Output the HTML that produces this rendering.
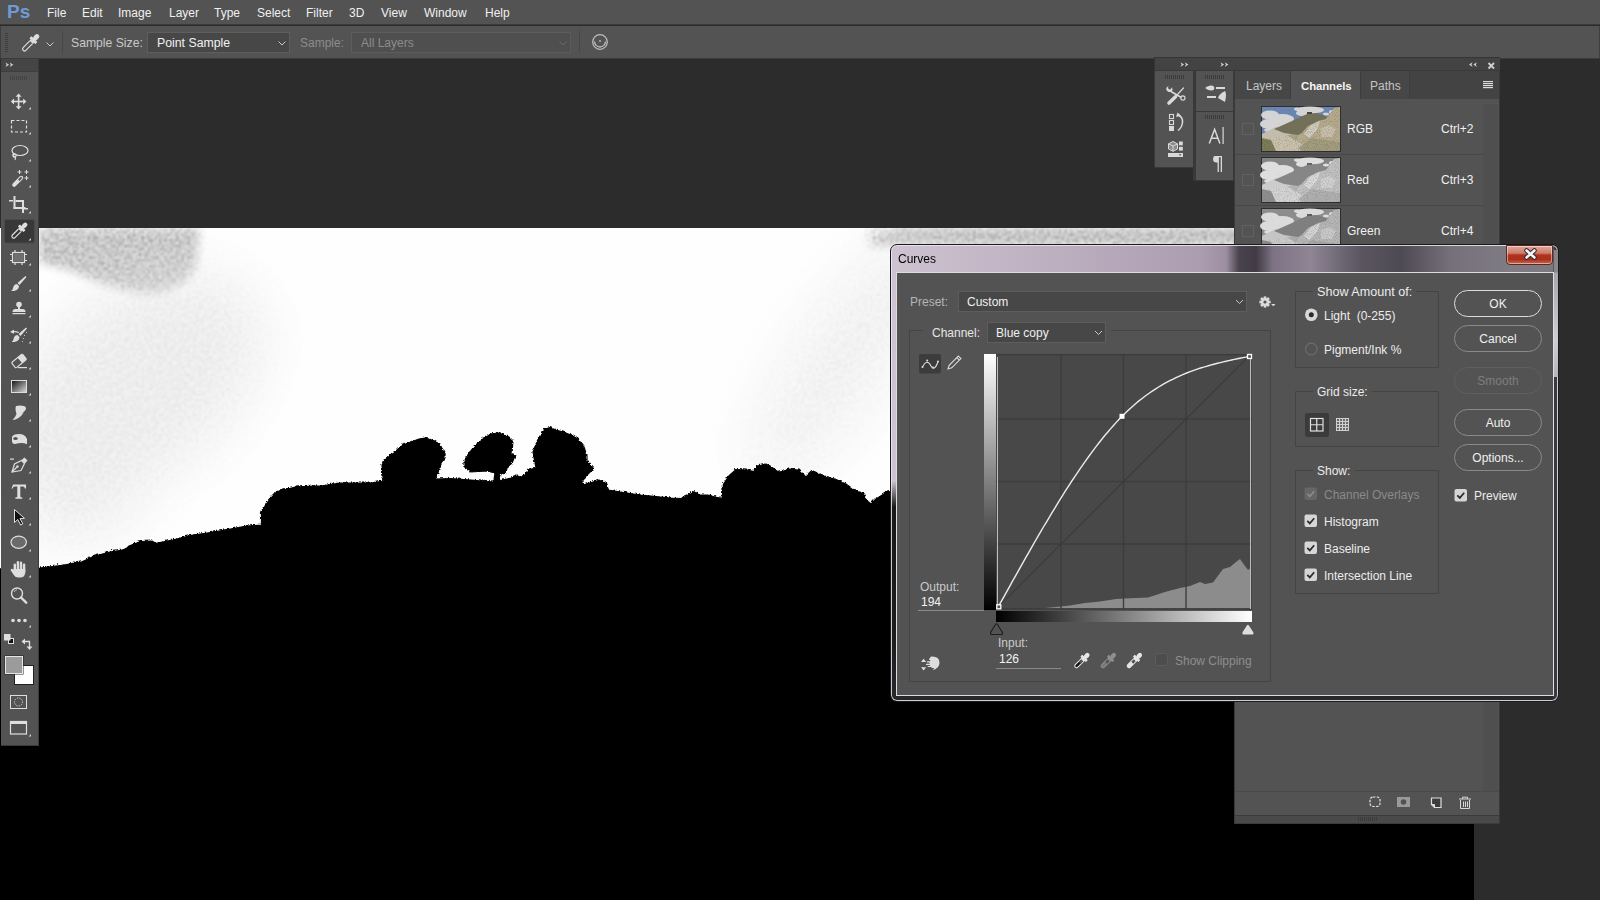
<!DOCTYPE html>
<html><head><meta charset="utf-8">
<style>
*{margin:0;padding:0;box-sizing:border-box}
html,body{width:1600px;height:900px;overflow:hidden;background:#2c2c2c;position:relative;font-family:"Liberation Sans",sans-serif}
.a{position:absolute}
.t{position:absolute;font-size:12px;line-height:14px;white-space:nowrap;color:#e8e8e8}
svg{position:absolute;overflow:visible}
</style></head><body>

<!-- MENU BAR -->
<div class="a" style="left:0;top:0;width:1600px;height:25px;background:#535353;border-bottom:1px solid #3b3b3b"></div>
<div class="t" style="left:7px;top:1px;font-size:19px;line-height:22px;font-weight:bold;color:#6e9bd8;letter-spacing:0px">Ps</div>
<div class="t" style="left:47px;top:6px;color:#f0f0f0">File</div>
<div class="t" style="left:82px;top:6px;color:#f0f0f0">Edit</div>
<div class="t" style="left:118px;top:6px;color:#f0f0f0">Image</div>
<div class="t" style="left:169px;top:6px;color:#f0f0f0">Layer</div>
<div class="t" style="left:214px;top:6px;color:#f0f0f0">Type</div>
<div class="t" style="left:257px;top:6px;color:#f0f0f0">Select</div>
<div class="t" style="left:306px;top:6px;color:#f0f0f0">Filter</div>
<div class="t" style="left:349px;top:6px;color:#f0f0f0">3D</div>
<div class="t" style="left:381px;top:6px;color:#f0f0f0">View</div>
<div class="t" style="left:424px;top:6px;color:#f0f0f0">Window</div>
<div class="t" style="left:485px;top:6px;color:#f0f0f0">Help</div>

<!-- OPTIONS BAR -->
<div class="a" style="left:0;top:26px;width:1600px;height:33px;background:#535353;border-left:1px solid #3f3f3f;border-right:1px solid #3f3f3f;border-bottom:1px solid #3b3b3b"></div>
<svg style="left:0;top:26px" width="620" height="33">
 <g fill="#3e3e3e"><rect x="5" y="7" width="3" height="1"/><rect x="5" y="9" width="3" height="1"/><rect x="5" y="11" width="3" height="1"/><rect x="5" y="13" width="3" height="1"/><rect x="5" y="15" width="3" height="1"/><rect x="5" y="17" width="3" height="1"/><rect x="5" y="19" width="3" height="1"/><rect x="5" y="21" width="3" height="1"/><rect x="5" y="23" width="3" height="1"/><rect x="5" y="25" width="3" height="1"/></g>
 <!-- eyedropper -->
 <g transform="translate(30.5,17) rotate(45)">
  <rect x="-2.4" y="-11.5" width="4.8" height="7" rx="2.4" fill="#dcdcdc"/>
  <rect x="-4.2" y="-5.5" width="8.4" height="3" rx="0.5" fill="#dcdcdc"/>
  <rect x="-2.4" y="-3" width="4.8" height="2" fill="#dcdcdc"/>
  <path d="M-1.9 -1 v9.5 a1.9 1.9 0 0 0 3.8 0 v-9.5" fill="none" stroke="#dcdcdc" stroke-width="1.2"/>
 </g>
 <path d="M46.5 16.5 l3.5 3.5 3.5 -3.5" fill="none" stroke="#c8c8c8" stroke-width="1"/>
 <rect x="62" y="5" width="1" height="22" fill="#474747"/>
 <rect x="579" y="5" width="1" height="22" fill="#474747"/>
 <g transform="translate(600,16)" fill="none" stroke="#bdbdbd" stroke-width="1.3">
  <circle r="7.3"/><path d="M-5.5 -0.5 a5.5 5.5 0 0 0 11 0"/>
 </g>
 <circle cx="600" cy="15" r="0.9" fill="#bdbdbd"/>
</svg>
<div class="t" style="left:71px;top:36px;color:#c9c9c9;font-size:12.2px">Sample Size:</div>
<div class="a" style="left:147px;top:32px;width:143px;height:21px;background:#474747;border:1px solid #5e5e5e"></div>
<div class="t" style="left:157px;top:36px;color:#f2f2f2;font-size:12.3px">Point Sample</div>
<svg style="left:278px;top:41px" width="10" height="6"><path d="M0.5 0.5 l3.5 3.5 3.5 -3.5" fill="none" stroke="#c8c8c8" stroke-width="1"/></svg>
<div class="t" style="left:300px;top:36px;color:#8c8c8c;font-size:12px">Sample:</div>
<div class="a" style="left:351px;top:32px;width:220px;height:21px;background:#4f4f4f;border:1px solid #5c5c5c"></div>
<div class="t" style="left:361px;top:36px;color:#8c8c8c;font-size:12px">All Layers</div>
<svg style="left:559px;top:41px" width="10" height="6"><path d="M0.5 0.5 l3.5 3.5 3.5 -3.5" fill="none" stroke="#6a6a6a" stroke-width="1"/></svg>

<!-- IMAGE -->
<svg style="left:0px;top:228px;overflow:hidden" width="1474" height="672" viewBox="-39 0 1474 672">
 <defs>
  <filter id="blur8" x="-50%" y="-50%" width="200%" height="200%"><feGaussianBlur stdDeviation="28"/></filter>
  <filter id="blur3" x="-20%" y="-20%" width="140%" height="140%"><feGaussianBlur stdDeviation="5"/></filter>
  <filter id="noise" x="0" y="0" width="100%" height="100%">
   <feTurbulence type="fractalNoise" baseFrequency="0.6" numOctaves="2" seed="3" result="n"/>
   <feColorMatrix in="n" type="matrix" values="0 0 0 0 0  0 0 0 0 0  0 0 0 0 0  0 0 0 -2.6 1.5" result="a"/>
   <feComposite in="SourceGraphic" in2="a" operator="in"/>
  </filter>
 </defs>
 <rect x="-39" width="1474" height="672" fill="#fefefe"/>
 <defs>
  <filter id="mott" x="0" y="0" width="100%" height="100%">
   <feTurbulence type="fractalNoise" baseFrequency="0.35" numOctaves="2" seed="7" result="n"/>
   <feColorMatrix in="n" type="matrix" values="0 0 0 0 0  0 0 0 0 0  0 0 0 0 0  0 0 0 -2.4 1.55" result="a0"/>
   <feGaussianBlur in="a0" stdDeviation="0.8" result="a"/>
   <feComposite in="SourceGraphic" in2="a" operator="in"/>
  </filter>
  <mask id="mk1" maskUnits="userSpaceOnUse" x="0" y="0" width="1435" height="672">
   <g filter="url(#blur3)">
    <path d="M0 0 H160 Q158 25 156 37 Q150 60 112 66 Q80 62 56 52 Q30 40 0 34Z" fill="#fff"/>
    <path d="M830 0 H1210 V18 H830 Z" fill="#fff"/>
   </g>
   <g filter="url(#blur8)">
    <ellipse cx="90" cy="160" rx="150" ry="90" fill="#333" transform="rotate(-35 90 160)"/>
    <ellipse cx="30" cy="250" rx="60" ry="60" fill="#333"/>
    <ellipse cx="805" cy="130" rx="45" ry="150" fill="#262626" transform="rotate(35 805 130)"/>
   </g>
  </mask>
 </defs>
 <g filter="url(#blur8)" opacity="0.9">
  <ellipse cx="90" cy="160" rx="150" ry="90" fill="#f3f3f3" transform="rotate(-35 90 160)"/>
  <ellipse cx="40" cy="250" rx="70" ry="60" fill="#f3f3f3"/>
  <ellipse cx="805" cy="130" rx="50" ry="150" fill="#f6f6f6" transform="rotate(35 805 130)"/>
 </g>
 <g filter="url(#blur3)">
  <path d="M0 0 H160 Q158 25 156 37 Q150 60 112 66 Q80 62 56 52 Q30 40 0 34Z" fill="#e2e2e2"/>
  <path d="M860 0 H1200 V16 H830 Z" fill="#d8d8d8"/>
 </g>
 <g mask="url(#mk1)">
  <rect width="1435" height="672" fill="#9a9a9a" filter="url(#mott)"/>
 </g>
 <filter id="rough" x="-5%" y="-5%" width="110%" height="110%"><feTurbulence type="turbulence" baseFrequency="0.35" numOctaves="2" seed="2" result="t"/><feDisplacementMap in="SourceGraphic" in2="t" scale="2.5" xChannelSelector="R" yChannelSelector="G"/></filter>
 <path d="M-50 340 L0.0 339.0 L21.0 336.5 L42.0 332.8 L53.0 327.7 L70.0 323.0 L85.5 320.5 L89.0 317.0 L100.6 312.5 L112.0 312.0 L116.0 314.4 L132.7 311.0 L151.6 306.3 L170.5 303.5 L193.0 299.7 L208.0 297.0 L221.5 296.0 L221.5 284.6 L225.0 277.0 L229.0 271.3 L236.6 262.8 L255.5 258.1 L274.4 257.2 L281.0 257.0 L299.8 254.2 L331.0 254.0 L344.0 252.0 L343.0 248.0 L342.0 236.0 L345.0 231.0 L351.0 226.0 L357.0 222.0 L363.0 216.0 L371.0 213.0 L379.0 210.0 L385.0 209.0 L393.0 211.0 L400.0 216.0 L405.0 223.0 L405.0 230.0 L401.0 235.0 L399.0 244.0 L396.0 249.0 L395.0 250.0 L411.0 249.5 L431.0 251.0 L453.0 253.0 L454.0 252.0 L455.0 244.0 L447.0 242.0 L431.0 243.0 L425.0 239.0 L425.0 232.0 L430.0 224.0 L436.0 217.0 L443.0 210.0 L451.0 205.0 L459.0 204.0 L469.0 208.0 L473.0 212.0 L472.0 225.0 L476.0 227.0 L473.0 234.0 L467.0 239.0 L466.0 244.0 L461.0 246.0 L459.0 252.0 L471.0 249.0 L477.0 247.0 L483.0 248.0 L488.0 243.0 L489.0 241.0 L496.0 239.0 L495.0 234.0 L493.0 223.0 L497.0 214.0 L501.0 207.0 L505.0 200.0 L510.0 198.5 L516.0 201.0 L523.0 203.0 L531.0 206.0 L538.0 210.0 L544.0 218.0 L547.0 227.0 L547.0 232.0 L554.0 240.0 L548.0 246.0 L543.0 251.0 L543.0 256.0 L553.0 253.0 L560.0 251.0 L567.0 255.0 L568.0 261.0 L581.0 263.0 L601.0 266.0 L631.0 269.0 L641.0 269.5 L649.0 266.0 L655.0 262.6 L659.0 266.0 L668.5 266.0 L682.0 269.5 L683.6 255.0 L689.0 246.8 L696.0 240.6 L707.0 241.0 L714.0 242.6 L718.0 237.0 L726.0 235.0 L734.5 240.0 L740.0 243.3 L749.7 240.0 L759.0 241.0 L766.0 248.0 L771.7 242.6 L785.0 248.0 L795.0 250.0 L806.0 255.0 L814.0 261.0 L824.0 264.6 L826.7 271.5 L831.0 275.0 L836.0 270.0 L847.0 263.0 L851.0 262.6 L861.0 258.0 L961.0 250.0 L1450 241.8 L1450 690 L-50 690Z" fill="#000" stroke="#000" stroke-width="1.2" stroke-linejoin="round" filter="url(#rough)"/>
</svg>

<!-- TOOLBAR -->
<div class="a" style="left:1px;top:59px;width:38px;height:687px;background:#535353;border-right:1px solid #3b3b3b;border-bottom:1px solid #3b3b3b"></div>
<div class="a" style="left:1px;top:59px;width:37px;height:13px;background:#454545;border-bottom:1px solid #3e3e3e"></div>
<svg style="left:0;top:0" width="40" height="750">
 <path d="M5.5 62.5 L9.1 64.8 L5.5 67.1 L6.6 64.8Z M9.7 62.5 L13.299999999999999 64.8 L9.7 67.1 L10.799999999999999 64.8Z" fill="#d4d4d4"/>
 <g fill="#434343"><rect x="10" y="76" width="1" height="4"/><rect x="12" y="76" width="1" height="4"/><rect x="14" y="76" width="1" height="4"/><rect x="16" y="76" width="1" height="4"/><rect x="18" y="76" width="1" height="4"/><rect x="20" y="76" width="1" height="4"/><rect x="22" y="76" width="1" height="4"/><rect x="24" y="76" width="1" height="4"/><rect x="26" y="76" width="1" height="4"/></g>
 <!-- move -->
 <g fill="#dedede" stroke="none">
  <rect x="17.8" y="96" width="1.6" height="12"/><rect x="12.5" y="100.7" width="12" height="1.6"/>
  <path d="M18.6 93.5 l3 3.2 h-6z M18.6 109.5 l3 -3.2 h-6z M10.8 101.5 l3.2 -3 v6z M26.4 101.5 l-3.2 -3 v6z"/>
 </g>
 <path d="M28.5 109.5 l2.5 -2.5 v2.5z" fill="#cfcfcf"/>
 <!-- marquee -->
 <rect x="11.5" y="120.5" width="15" height="11.5" fill="none" stroke="#dedede" stroke-width="1.2" stroke-dasharray="3 2"/>
 <path d="M28.5 134.5 l2.5 -2.5 v2.5z" fill="#cfcfcf"/>
 <!-- lasso -->
 <g fill="none" stroke="#dedede" stroke-width="1.2"><ellipse cx="20" cy="150.5" rx="8" ry="5"/><path d="M14 153 q-2 3 1 4 q1 1 0 3"/><circle cx="14.5" cy="155.5" r="1.6"/></g>
 <path d="M28.5 161.5 l2.5 -2.5 v2.5z" fill="#cfcfcf"/>
 <!-- magic wand -->
 <g transform="translate(17,182) rotate(45)"><rect x="-2" y="-8" width="4" height="14" rx="2" fill="#dedede"/><rect x="-1" y="-6.5" width="2" height="4" fill="#535353"/></g>
 <g fill="#dedede"><path d="M19 170 h1 v1.5 h1.5 v1 h-1.5 v1.5 h-1 v-1.5 h-1.5 v-1 h1.5z"/><path d="M26 170 h1 v1.5 h1.5 v1 h-1.5 v1.5 h-1 v-1.5 h-1.5 v-1 h1.5z"/><path d="M26 176 h1 v1.5 h1.5 v1 h-1.5 v1.5 h-1 v-1.5 h-1.5 v-1 h1.5z"/></g>
 <path d="M28.5 187.5 l2.5 -2.5 v2.5z" fill="#cfcfcf"/>
 <!-- crop -->
 <g fill="#dedede"><rect x="13.5" y="196" width="2" height="13"/><rect x="13.5" y="207" width="12" height="2"/><rect x="9" y="200" width="4" height="1.5"/><rect x="15.5" y="200" width="8" height="2"/><rect x="22" y="200" width="2" height="13"/><rect x="24" y="208" width="4" height="1.5"/></g>
 <path d="M28.5 213.5 l2.5 -2.5 v2.5z" fill="#cfcfcf"/>
 <!-- eyedropper selected -->
 <rect x="4.5" y="219.5" width="30" height="23.5" rx="2" fill="#383838" stroke="#4a4a4a" stroke-width="1"/>
 <g transform="translate(19,231) rotate(45)">
  <rect x="-2.2" y="-11" width="4.4" height="6.5" rx="2.2" fill="#dedede"/>
  <rect x="-4" y="-5.2" width="8" height="2.8" rx="0.5" fill="#dedede"/>
  <rect x="-2.2" y="-3" width="4.4" height="2" fill="#dedede"/>
  <path d="M-1.8 -1 v8.5 a1.8 1.8 0 0 0 3.6 0 v-8.5" fill="none" stroke="#dedede" stroke-width="1.2"/>
 </g>
 <path d="M28.5 240.5 l2.5 -2.5 v2.5z" fill="#cfcfcf"/>
 <!-- frame -->
 <g fill="none" stroke="#dedede" stroke-width="1.2"><rect x="12.5" y="252.5" width="12" height="10"/>
 <path d="M10 254.5 h2.5 M10 260.5 h2.5 M24.5 254.5 h2.5 M24.5 260.5 h2.5 M15 250 v2.5 M22 250 v2.5 M15 262.5 v2.5 M22 262.5 v2.5"/></g>
 <rect x="13.5" y="253.5" width="10" height="8" fill="#707070"/>
 <path d="M28.5 265.5 l2.5 -2.5 v2.5z" fill="#cfcfcf"/>
 <!-- brush -->
 <g fill="#dedede"><path d="M25.5 276 l1 1 -7 8 -2 -2z"/><path d="M17 284 l2 2 q0 4 -5 5 q-3 0 -3 0 q2 -1 2 -3 q1 -4 4 -4z"/></g>
 <path d="M28.5 291.5 l2.5 -2.5 v2.5z" fill="#cfcfcf"/>
 <!-- stamp -->
 <g fill="#dedede"><circle cx="19" cy="304.5" r="2.8"/><rect x="18" y="306" width="2" height="3"/><path d="M12.5 312 q0 -3 3 -3 h7 q3 0 3 3z"/><rect x="12.5" y="313" width="13" height="1.2"/></g>
 <path d="M28.5 317.5 l2.5 -2.5 v2.5z" fill="#cfcfcf"/>
 <!-- history brush -->
 <g fill="#dedede"><path d="M26 327.5 l1 1 -6.5 7.5 -2 -2z"/><path d="M17.5 335 l2 2 q0 4 -5 5 q-3 0 -3 0 q2 -1 2 -3 q1 -4 4 -4z"/><path d="M10 332 l4 -2.5 v1.5 q3 0 5 1 l-0.5 1 q-2 -1 -4.5 -0.8 v1.5z"/></g>
 <g fill="#bdbdbd"><rect x="24" y="335" width="1" height="1"/><rect x="23" y="338" width="1" height="1"/><rect x="22" y="341" width="1" height="1"/><rect x="26" y="332" width="1" height="1"/></g>
 <path d="M28.5 343.5 l2.5 -2.5 v2.5z" fill="#cfcfcf"/>
 <!-- eraser -->
 <g transform="translate(19,361) rotate(-40)"><rect x="-7" y="-3.5" width="14" height="7" rx="1.2" fill="none" stroke="#dedede" stroke-width="1.2"/><rect x="1" y="-3.5" width="6" height="7" fill="#dedede"/></g>
 <rect x="18" y="367" width="9" height="1.2" fill="#dedede"/>
 <path d="M28.5 369.5 l2.5 -2.5 v2.5z" fill="#cfcfcf"/>
 <!-- gradient -->
 <defs><linearGradient id="gt" x1="0" y1="0" x2="1" y2="1"><stop offset="0" stop-color="#111"/><stop offset="1" stop-color="#ddd"/></linearGradient></defs>
 <rect x="11.5" y="380.5" width="15" height="12" fill="url(#gt)" stroke="#dedede" stroke-width="1"/>
 <path d="M28.5 395.5 l2.5 -2.5 v2.5z" fill="#cfcfcf"/>
 <!-- smudge -->
 <path d="M16 406 q4 -1 8 0 q3 1 1.5 4 q-2 3 -5 4 l3 -1 q-2 3 -5 5 q-3 2 -6 2 q3 -3 4 -6 q-1 -3 -1 -5 q0 -2 0.5 -3z" fill="#dedede"/>
 <path d="M28.5 421.5 l2.5 -2.5 v2.5z" fill="#cfcfcf"/>
 <!-- sponge/dodge -->
 <path d="M12 437 q1 -3 7 -3 q6 0 8 5 v5 h-1 q-1 -1 -4 -1 q-4 0 -7 1 q-3 0 -3 -3z" fill="#dedede"/>
 <ellipse cx="15.5" cy="438.5" rx="2.2" ry="1.6" fill="#535353"/>
 <path d="M28.5 447.5 l2.5 -2.5 v2.5z" fill="#cfcfcf"/>
 <!-- pen -->
 <g fill="none" stroke="#dedede" stroke-width="1.2"><path d="M12 472 l2.5 -8 7 -3.5 3 3 -3.5 7z"/><path d="M12 472 l5 -5"/></g>
 <path d="M21.5 460 l3 -2.5 3 3 -2.5 3z" fill="#dedede"/><circle cx="17.5" cy="466.5" r="1.2" fill="#dedede"/><rect x="10" y="458.5" width="4" height="1.2" fill="#dedede"/>
 <path d="M28.5 473.5 l2.5 -2.5 v2.5z" fill="#cfcfcf"/>
 <!-- type -->
 <g fill="#dedede"><path d="M13 484.5 h13 v4 h-1.2 q0 -2 -2 -2 h-2.5 v10 q0 1 2 1 v1.2 h-7 v-1.2 q2 0 2 -1 v-10 h-2.5 q-2 0 -2 2 h-1.2z"/></g>
 <path d="M28.5 499.5 l2.5 -2.5 v2.5z" fill="#cfcfcf"/>
 <!-- path select -->
 <path d="M14.5 509.5 v13 l3.3 -3 2.8 5.5 2.2 -1.1 -2.8 -5.3 4.5 -0.3z" fill="#111" stroke="#dedede" stroke-width="1"/>
 <path d="M28.5 525.5 l2.5 -2.5 v2.5z" fill="#cfcfcf"/>
 <!-- ellipse -->
 <ellipse cx="18.7" cy="542.2" rx="7.7" ry="6.1" fill="#6b6b6b" stroke="#dedede" stroke-width="1.2"/>
 <path d="M28.5 551.5 l2.5 -2.5 v2.5z" fill="#cfcfcf"/>
 <!-- hand -->
 <g fill="#dedede">
  <rect x="13.6" y="563.5" width="2.4" height="9" rx="1.2"/>
  <rect x="16.7" y="561" width="2.4" height="10" rx="1.2"/>
  <rect x="19.8" y="561.5" width="2.4" height="10" rx="1.2"/>
  <rect x="22.9" y="563.5" width="2.4" height="9" rx="1.2"/>
  <path d="M13.6 569 h11.7 v3 q0 5.5 -5.5 5.5 h-1.5 q-3 0 -4.5 -2.5 l-3 -4.5 q-0.6 -1.2 0.6 -1.6 q1 -0.3 1.6 0.6 l0.6 0.8z"/>
 </g>
 <path d="M28.5 577.5 l2.5 -2.5 v2.5z" fill="#cfcfcf"/>
 <!-- zoom -->
 <g fill="none" stroke="#dedede" stroke-width="1.4"><circle cx="17" cy="593.5" r="5.5"/><path d="M21 597.5 l5.2 5.2" stroke-width="2.4" stroke-linecap="round"/></g>
 <path d="M14 592 q1 -2 3 -2.3" fill="none" stroke="#dedede" stroke-width="0.8"/>
 <!-- more -->
 <g fill="#dedede"><circle cx="13" cy="620.5" r="1.8"/><circle cx="19" cy="620.5" r="1.8"/><circle cx="25" cy="620.5" r="1.8"/></g>
 <path d="M28.5 627.5 l2.5 -2.5 v2.5z" fill="#cfcfcf"/>
 <!-- default colors -->
 <rect x="8.5" y="638.5" width="5" height="5" fill="#111" stroke="#dedede" stroke-width="1"/>
 <rect x="4.5" y="634.5" width="5.5" height="5.5" fill="#dedede" stroke="#dedede" stroke-width="1"/>
 <g fill="none" stroke="#dedede" stroke-width="1.3"><path d="M24 641.5 h5.5 v6"/></g><path d="M21.5 641.5 l3.5 -3 v6z M29.5 650 l-3 -3.5 h6z" fill="#dedede"/>
 <!-- fg/bg -->
 <rect x="14.5" y="665.5" width="19" height="19" fill="#fff" stroke="#222" stroke-width="1"/>
 <rect x="4.5" y="655.5" width="19" height="19" fill="#222"/>
 <rect x="5.5" y="656.5" width="17" height="17" fill="#9b9b9b" stroke="#e6e6e6" stroke-width="1"/>
 <!-- quick mask -->
 <rect x="10.5" y="695.5" width="16" height="13" fill="none" stroke="#dedede" stroke-width="1"/>
 <circle cx="18.5" cy="702" r="4" fill="none" stroke="#dedede" stroke-width="1" stroke-dasharray="1.2 1.2"/>
 <!-- screen mode -->
 <rect x="10.5" y="721.5" width="16" height="12.5" fill="none" stroke="#dedede" stroke-width="1.2"/>
 <rect x="10.5" y="721.5" width="16" height="2.5" fill="#dedede"/>
 <path d="M28.5 736.5 l2.5 -2.5 v2.5z" fill="#cfcfcf"/>
</svg>

<!-- PANEL DOCK -->
<div class="a" style="left:1154px;top:57px;width:346px;height:14px;background:#434343;border-top:1px solid #353535;border-left:1px solid #353535"></div>
<div class="a" style="left:1154px;top:70px;width:41px;height:98px;background:#393939"></div>
<div class="a" style="left:1155px;top:70px;width:38px;height:97px;background:#535353;border-top:1px solid #3a3a3a"></div>
<div class="a" style="left:1193px;top:70px;width:43px;height:111px;background:#393939"></div>
<div class="a" style="left:1196px;top:71px;width:37px;height:40px;background:#535353"></div>
<div class="a" style="left:1196px;top:112px;width:37px;height:68px;background:#535353"></div>
<!-- main panel -->
<div class="a" style="left:1234px;top:70px;width:266px;height:754px;background:#393939"></div>
<div class="a" style="left:1235px;top:71px;width:264px;height:28px;background:#434343"></div>
<div class="a" style="left:1235px;top:71px;width:56px;height:28px;background:#474747;border-right:1px solid #3d3d3d"></div>
<div class="a" style="left:1291px;top:71px;width:69px;height:29px;background:#535353"></div>
<div class="a" style="left:1360px;top:71px;width:50px;height:28px;background:#474747;border-right:1px solid #3d3d3d;border-left:1px solid #3d3d3d"></div>
<div class="a" style="left:1235px;top:99px;width:264px;height:692px;background:#535353"></div>
<div class="a" style="left:1483px;top:104px;width:15px;height:687px;background:#4f4f4f"></div>
<div class="a" style="left:1235px;top:791px;width:264px;height:24px;background:#535353;border-top:1px solid #4a4a4a"></div>
<div class="a" style="left:1235px;top:815px;width:264px;height:9px;background:#4a4a4a;border-top:1px solid #3a3a3a;border-bottom:1px solid #3a3a3a"></div>
<div class="t" style="left:1246px;top:79px;color:#c4c4c4">Layers</div>
<div class="t" style="left:1301px;top:79px;color:#f4f4f4;font-weight:bold;font-size:11.4px;letter-spacing:-0.1px">Channels</div>
<div class="t" style="left:1370px;top:79px;color:#c4c4c4">Paths</div>
<!-- rows -->
<svg style="left:0;top:0;width:0;height:0">
 <defs>
  <filter id="tb" x="0" y="0" width="100%" height="100%"><feGaussianBlur stdDeviation="0.7"/></filter>
  <g id="thumb"><g filter="url(#tb)">
   <rect width="78" height="44" fill="#6a85b0"/>
   <g fill="#d4d4d4">
    <ellipse cx="8" cy="8" rx="9" ry="4.5"/><ellipse cx="20" cy="12" rx="12" ry="5"/><ellipse cx="7" cy="17" rx="9" ry="5"/><ellipse cx="24" cy="19" rx="10" ry="4"/><ellipse cx="14" cy="23" rx="12" ry="3"/>
    <ellipse cx="48" cy="3" rx="14" ry="3.5"/><ellipse cx="40" cy="6" rx="6" ry="3"/><ellipse cx="35" cy="2" rx="3" ry="1.5"/><ellipse cx="64" cy="7" rx="3" ry="1.5"/><ellipse cx="70" cy="5" rx="3" ry="2"/>
   </g>
   <path d="M0 27 L14 20 L30 20 L36 26 L20 32 L0 34Z" fill="#c2bcaf"/>
   <path d="M18 31 L36 25 L48 18 L42 31 L30 37Z" fill="#a9a08a"/>
   <path d="M12 22 L30 14 L45 7 L55 6 L64 9 L67 14 L54 18 L45 23 L36 28 L22 26Z" fill="#727058"/>
   <path d="M36 30 L46 19 L56 14 L64 12 L72 1 L78 0 L78 44 L32 44 L30 36Z" fill="#b7ab8e"/>
   <path d="M42 27 L49 18 L58 14 L55 23 L47 31Z" fill="#d0cbc0"/>
   <path d="M58 22 L66 18 L74 22 L70 30 L60 30Z" fill="#c8c0ae"/>
   <path d="M0 31 L26 29 L38 36 L48 44 L0 44Z" fill="#cbc2ad"/>
   <path d="M0 31 L9 33 L14 44 L0 44Z" fill="#7b7b58"/>
   <path d="M36 41 L50 31 L78 35 L78 44 L40 44Z" fill="#a39d7e"/>
   <rect x="45" y="5" width="5" height="2" fill="#444"/>
  </g>
  <path d="M36 30 L46 19 L56 14 L64 12 L72 1 L78 0 L78 44 L0 44 L0 31 L26 29Z" fill="#3a3a30" filter="url(#tnoise)" opacity="0.28"/>
  </g>
  <filter id="tnoise" x="0" y="0" width="100%" height="100%">
   <feTurbulence type="fractalNoise" baseFrequency="0.9" numOctaves="1" seed="5" result="n"/>
   <feColorMatrix in="n" type="matrix" values="0 0 0 0 0  0 0 0 0 0  0 0 0 0 0  0 0 0 -3 1.6" result="a"/>
   <feComposite in="SourceGraphic" in2="a" operator="in"/>
  </filter>
  <filter id="redch"><feColorMatrix type="matrix" values="0.8 0.2 0 0 0.07  0.8 0.2 0 0 0.07  0.8 0.2 0 0 0.07  0 0 0 1 0"/></filter>
  <filter id="grch"><feColorMatrix type="matrix" values="0.2 0.8 0 0 0.05  0.2 0.8 0 0 0.05  0.2 0.8 0 0 0.05  0 0 0 1 0"/></filter>
 </defs>
</svg>
<svg style="left:1261px;top:106px" width="80" height="46"><rect x="0.5" y="0.5" width="79" height="45" fill="#222" stroke="#2e2e2e"/><use href="#thumb" x="1" y="1"/></svg>
<svg style="left:1261px;top:157px" width="80" height="46"><rect x="0.5" y="0.5" width="79" height="45" fill="#222" stroke="#2e2e2e"/><g filter="url(#redch)"><use href="#thumb" x="1" y="1"/></g></svg>
<svg style="left:1261px;top:208px" width="80" height="46"><rect x="0.5" y="0.5" width="79" height="45" fill="#222" stroke="#2e2e2e"/><g filter="url(#grch)"><use href="#thumb" x="1" y="1"/></g></svg>
<div class="a" style="left:1242px;top:123px;width:12px;height:12px;border:1px solid #616161"></div>
<div class="a" style="left:1242px;top:174px;width:12px;height:12px;border:1px solid #616161"></div>
<div class="a" style="left:1242px;top:225px;width:12px;height:12px;border:1px solid #616161"></div>

<div class="a" style="left:1235px;top:154px;width:248px;height:1px;background:#474747"></div>
<div class="a" style="left:1235px;top:205px;width:248px;height:1px;background:#474747"></div>
<div class="t" style="left:1347px;top:122px;color:#f0f0f0">RGB</div>
<div class="t" style="left:1441px;top:122px;color:#f0f0f0">Ctrl+2</div>
<div class="t" style="left:1347px;top:173px;color:#f0f0f0">Red</div>
<div class="t" style="left:1441px;top:173px;color:#f0f0f0">Ctrl+3</div>
<div class="t" style="left:1347px;top:224px;color:#f0f0f0">Green</div>
<div class="t" style="left:1441px;top:224px;color:#f0f0f0">Ctrl+4</div>
<svg style="left:1150px;top:55px" width="350" height="770">
 <g fill="#d0d0d0">
  <path d="M30.5 7.3 L34.1 9.6 L30.5 11.899999999999999 L31.6 9.6Z M34.8 7.3 L38.4 9.6 L34.8 11.899999999999999 L35.9 9.6Z"/>
  <path d="M70.5 7.3 L74.1 9.6 L70.5 11.899999999999999 L71.6 9.6Z M74.8 7.3 L78.39999999999999 9.6 L74.8 11.899999999999999 L75.89999999999999 9.6Z"/>
  <path d="M322.6 7.3 L319 9.6 L322.6 11.899999999999999 L321.5 9.6Z M326.90000000000003 7.3 L323.3 9.6 L326.90000000000003 11.899999999999999 L325.8 9.6Z"/>
 </g>
 <path d="M338.5 8 l5.5 5.5 M344 8 l-5.5 5.5" stroke="#d0d0d0" stroke-width="1.8"/>
 <g fill="#3c3c3c"><rect x="15" y="20" width="1" height="4"/><rect x="17" y="20" width="1" height="4"/><rect x="19" y="20" width="1" height="4"/><rect x="21" y="20" width="1" height="4"/><rect x="23" y="20" width="1" height="4"/><rect x="25" y="20" width="1" height="4"/><rect x="27" y="20" width="1" height="4"/><rect x="29" y="20" width="1" height="4"/><rect x="31" y="20" width="1" height="4"/><rect x="33" y="20" width="1" height="4"/><rect x="55" y="20" width="1" height="4"/><rect x="57" y="20" width="1" height="4"/><rect x="59" y="20" width="1" height="4"/><rect x="61" y="20" width="1" height="4"/><rect x="63" y="20" width="1" height="4"/><rect x="65" y="20" width="1" height="4"/><rect x="67" y="20" width="1" height="4"/><rect x="69" y="20" width="1" height="4"/><rect x="71" y="20" width="1" height="4"/><rect x="73" y="20" width="1" height="4"/><rect x="55" y="60" width="1" height="4"/><rect x="57" y="60" width="1" height="4"/><rect x="59" y="60" width="1" height="4"/><rect x="61" y="60" width="1" height="4"/><rect x="63" y="60" width="1" height="4"/><rect x="65" y="60" width="1" height="4"/><rect x="67" y="60" width="1" height="4"/><rect x="69" y="60" width="1" height="4"/><rect x="71" y="60" width="1" height="4"/><rect x="73" y="60" width="1" height="4"/></g>
 <g fill="#d8d8d8"><rect x="333" y="26" width="10" height="1.2"/><rect x="333" y="28" width="10" height="1.2"/><rect x="333" y="30" width="10" height="1.2"/><rect x="333" y="32" width="10" height="1.2"/></g>
 <!-- tools icon -->
 <g stroke="#d9d9d9" fill="none" stroke-linecap="round">
  <path d="M21 36.5 L30.5 42" stroke-width="1.6"/>
  <path d="M33.5 33 L25.5 41.5" stroke-width="1.2"/>
  <path d="M25.5 41.8 L19 48" stroke-width="3.6"/>
  <circle cx="32.9" cy="43" r="2.1" stroke-width="1.2"/>
 </g>
 <path d="M16.2 33.8 q0.2 -2.4 2.6 -2.6 l-1 1.6 1.3 1.6 1.9 -0.4 0.8 -1.7 q1.6 1.9 0.2 3.7 q-1.6 1.6 -3.8 0.8 q-2.1 -0.9 -2 -3z" fill="#d9d9d9"/>
 <!-- history icon -->
 <g fill="none" stroke="#d9d9d9" stroke-width="1.1"><rect x="19.5" y="59.5" width="4" height="4"/><rect x="19.5" y="65.5" width="4" height="4"/></g>
 <rect x="19" y="71" width="5" height="5" fill="#d9d9d9"/>
 <path d="M28.5 60.5 q4.5 1.5 4 7 q-0.5 5 -4.5 8" fill="none" stroke="#d9d9d9" stroke-width="1.5"/>
 <path d="M26 62 l1.5 -4.5 3.5 3z" fill="#d9d9d9"/>
 <!-- 3D icon -->
 <path d="M23 86.5 l4.5 2.3 v5.2 l-4.5 2.3 -4.5 -2.3 v-5.2z" fill="#8a8a8a" stroke="#d9d9d9" stroke-width="1"/>
 <path d="M18.5 88.8 l4.5 2.3 4.5 -2.3 M23 91.1 v5.2" fill="none" stroke="#d9d9d9" stroke-width="1"/>
 <rect x="29" y="86.5" width="3.8" height="3.8" fill="#d9d9d9"/><rect x="29" y="91.8" width="3.8" height="3.8" fill="#d9d9d9"/>
 <rect x="18" y="98" width="15" height="4" fill="#d9d9d9"/><path d="M28.8 99.3 h2.6 l-1.3 1.6z" fill="#535353"/>
 <!-- brush presets -->
 <g fill="#d9d9d9"><path d="M55 33 q3 -3 7 -2.5 q2.5 0.5 2.5 2.5 q0 2 -2.5 2.5 q-3 0.5 -7 -2.5z"/><rect x="66" y="32" width="9" height="2"/><rect x="57" y="41" width="9" height="2"/><path d="M75 36 q2 3 0 11 l-7 -4 q1 -4 7 -7z"/></g>
 <!-- A| -->
 <path d="M59.3 88.5 L64.6 74.3 L69.9 88.5 M61.3 83.3 H67.9" fill="none" stroke="#d9d9d9" stroke-width="1.5"/>
 <rect x="72.5" y="72" width="1.2" height="17" fill="#d9d9d9"/>
 <!-- pilcrow -->
 <path d="M65 101 h7 v16 h-1.3 v-14.7 h-1.8 v14.7 h-1.3 v-9.5 h-1 q-3.5 0 -3.5 -3.3 q0 -3.2 2 -3.2z" fill="#d9d9d9"/>
 <g fill="#3c3c3c"><rect x="208" y="762" width="1" height="4"/><rect x="210" y="762" width="1" height="4"/><rect x="212" y="762" width="1" height="4"/><rect x="214" y="762" width="1" height="4"/><rect x="216" y="762" width="1" height="4"/><rect x="218" y="762" width="1" height="4"/><rect x="220" y="762" width="1" height="4"/><rect x="222" y="762" width="1" height="4"/><rect x="224" y="762" width="1" height="4"/><rect x="226" y="762" width="1" height="4"/></g>
 <!-- footer icons -->
 <rect x="220" y="742" width="10" height="9.5" rx="3" fill="none" stroke="#e6e6e6" stroke-width="1.2" stroke-dasharray="2.4 1.4"/>
 <rect x="247" y="742" width="13" height="10" fill="#9a9a9a"/><circle cx="253.5" cy="747" r="2.8" fill="#535353"/>
 <path d="M281.5 743 h9.5 v9.5 h-6.5 l-3 -3z" fill="#3c3c3c" stroke="#e0e0e0" stroke-width="1.2"/><path d="M281.5 749.5 h3 v3" fill="#d0d0d0" stroke="#e0e0e0" stroke-width="1"/>
 <g fill="none" stroke="#d8d8d8" stroke-width="1.1"><path d="M309 744 h12 M312.5 744 v-1.8 h5 v1.8 M310.5 745 v8.5 h9 v-8.5 M313.5 746.5 v5.5 M315.5 746.5 v5.5 M317.5 746.5 v5.5" stroke-width="1"/></g>
</svg>
<!-- CURVES DIALOG -->
<div class="a" style="left:890px;top:244px;width:669px;height:458px;border-radius:7px;background:linear-gradient(90deg,rgba(0,0,0,0) 0,rgba(0,0,0,0) 662px,#3a3840 663px),linear-gradient(180deg,rgba(0,0,0,0) 0,rgba(0,0,0,0) 236px,#19181a 262px,#1e1d20 400px,#2a282d 100%),linear-gradient(90deg,#cdc3d1 0,#c2b5c5 110px,#b3a5b7 250px,#ab9caf 310px,#9d8fa1 335px,#4a434d 348px,#403b44 365px,#7d7384 382px,#8f8595 420px,#6e6874 450px,#5a5560 470px,#4e4a53 510px,#75707a 560px,#807c84 620px,#7a777d 669px);border:1px solid #1a1a1a;box-shadow:inset 0 0 0 1px rgba(235,235,235,0.85)"></div>
<div class="a" style="left:1554px;top:250px;width:4px;height:127px;background:linear-gradient(180deg,#858187 0,#8a868c 22px,#a9a5ac 23px,#d0cdd2 90px,#b8b5ba 127px)"></div>



<div class="t" style="left:898px;top:252px;color:#000">Curves</div>
<!-- close btn -->
<div class="a" style="left:1506px;top:245px;width:47px;height:20px;border-radius:0 0 4px 4px;border:1px solid #5a2a20;background:linear-gradient(180deg,#e3a99c 0,#cc7b69 40%,#b3321c 50%,#a8301f 75%,#c96a4f 100%);box-shadow:inset 0 0 0 1px rgba(255,255,255,0.45)"></div>
<svg style="left:1519px;top:246px" width="20" height="16"><path d="M7.5 4.5 L15.5 11.5 M15.5 4.5 L7.5 11.5" stroke="#2e2630" stroke-width="4.6" stroke-linecap="round"/><path d="M7.5 4.5 L15.5 11.5 M15.5 4.5 L7.5 11.5" stroke="#f4f4f4" stroke-width="2.6" stroke-linecap="round"/></svg>
<!-- client -->
<div class="a" style="left:896px;top:272px;width:658px;height:424px;background:#535353;border:1px solid #dedede"></div>
<div class="t" style="left:910px;top:295px;color:#b5b5b5;">Preset:</div>
<div class="a" style="left:958px;top:291px;width:289px;height:21px;background:#474747;border:1px solid #5d5d5d"></div>
<div class="t" style="left:967px;top:295px;color:#f0f0f0;">Custom</div>
<div class="t" style="left:932px;top:326px;color:#e6e6e6;">Channel:</div>
<div class="a" style="left:987px;top:322px;width:119px;height:21px;background:#474747;border:1px solid #5d5d5d"></div>
<div class="t" style="left:996px;top:326px;color:#f0f0f0;">Blue copy</div>
<div class="t" style="left:920px;top:580px;color:#cacaca;">Output:</div>
<div class="t" style="left:921px;top:595px;color:#f2f2f2;">194</div>
<div class="t" style="left:998px;top:636px;color:#cacaca;">Input:</div>
<div class="t" style="left:999px;top:652px;color:#f2f2f2;">126</div>
<div class="t" style="left:1175px;top:654px;color:#8e8e8e;">Show Clipping</div>
<div class="t" style="left:1317px;top:285px;color:#ececec;font-size:12.6px">Show Amount of:</div>
<div class="t" style="left:1324px;top:309px;color:#ececec;">Light&nbsp; (0-255)</div>
<div class="t" style="left:1324px;top:343px;color:#ececec;">Pigment/Ink %</div>
<div class="t" style="left:1317px;top:385px;color:#ececec;">Grid size:</div>
<div class="t" style="left:1317px;top:464px;color:#ececec;">Show:</div>
<div class="t" style="left:1324px;top:487.5px;color:#8a8a8a;">Channel Overlays</div>
<div class="t" style="left:1324px;top:515px;color:#ececec;">Histogram</div>
<div class="t" style="left:1324px;top:542px;color:#ececec;">Baseline</div>
<div class="t" style="left:1324px;top:569px;color:#ececec;">Intersection Line</div>
<div class="t" style="left:1474px;top:489px;color:#ececec;">Preview</div>
<div class="a" style="left:1454px;top:290px;width:88px;height:27px;border:1.5px solid #dcdcdc;border-radius:14px"></div>
<div class="t" style="left:1454px;width:88px;text-align:center;top:297px;color:#f0f0f0">OK</div>
<div class="a" style="left:1454px;top:325px;width:88px;height:27px;border:1px solid #8a8a8a;border-radius:14px"></div>
<div class="t" style="left:1454px;width:88px;text-align:center;top:332px;color:#f0f0f0">Cancel</div>
<div class="a" style="left:1454px;top:367px;width:88px;height:27px;border:1px solid #5f5f5f;border-radius:14px"></div>
<div class="t" style="left:1454px;width:88px;text-align:center;top:374px;color:#7e7e7e">Smooth</div>
<div class="a" style="left:1454px;top:409px;width:88px;height:27px;border:1px solid #8a8a8a;border-radius:14px"></div>
<div class="t" style="left:1454px;width:88px;text-align:center;top:416px;color:#f0f0f0">Auto</div>
<div class="a" style="left:1454px;top:444px;width:88px;height:27px;border:1px solid #8a8a8a;border-radius:14px"></div>
<div class="t" style="left:1454px;width:88px;text-align:center;top:451px;color:#f0f0f0">Options...</div>
<svg style="left:896px;top:272px" width="660" height="430">
 <defs>
  <linearGradient id="outg" x1="0" y1="0" x2="0" y2="1"><stop offset="0" stop-color="#fff"/><stop offset="1" stop-color="#000"/></linearGradient>
  <linearGradient id="ing" x1="0" y1="0" x2="1" y2="0"><stop offset="0" stop-color="#000"/><stop offset="1" stop-color="#fff"/></linearGradient>
 </defs>
 <!-- preset chevron & gear -->
 <path d="M340 28 l3.5 3.5 3.5 -3.5" fill="none" stroke="#c8c8c8" stroke-width="1"/>
 <path d="M199 59 l3.5 3.5 3.5 -3.5" fill="none" stroke="#c8c8c8" stroke-width="1"/>
 <g transform="translate(369,30)" fill="#dcdcdc">
  <circle r="3.9"/>
  <rect x="-1.3" y="-5.6" width="2.6" height="11.2"/><rect x="-5.6" y="-1.3" width="11.2" height="2.6"/>
  <rect x="-1.3" y="-5.6" width="2.6" height="11.2" transform="rotate(45)"/><rect x="-1.3" y="-5.6" width="2.6" height="11.2" transform="rotate(-45)"/>
 </g>
 <circle cx="369" cy="30" r="1.6" fill="#535353"/>
 <path d="M375 32 h4.5 l-2.25 2.3z" fill="#dcdcdc"/>
 <!-- fieldsets -->
 <path d="M27 58.5 H13.5 V409.5 H374.5 V58.5 H215" fill="none" stroke="#444" stroke-width="1"/>
 <path d="M417 19.5 H399.5 V95.5 H542.5 V19.5 H520" fill="none" stroke="#444" stroke-width="1"/>
 <path d="M417 119.5 H399.5 V174.5 H542.5 V119.5 H476" fill="none" stroke="#444" stroke-width="1"/>
 <path d="M417 198.5 H399.5 V321.5 H542.5 V198.5 H459" fill="none" stroke="#444" stroke-width="1"/>
 <!-- curve tool buttons -->
 <rect x="23" y="82" width="22" height="19.5" rx="2" fill="#3c3c3c"/>
 <path d="M26.5 95 q4.5 -9 8.5 -1 q3.5 6 7 -4.5" fill="none" stroke="#e0e0e0" stroke-width="1.1"/>
 <g fill="#e0e0e0"><circle cx="26.5" cy="95" r="1"/><circle cx="31.200000000000045" cy="88.5" r="1"/><circle cx="37" cy="95.5" r="1"/><circle cx="42" cy="89.5" r="1"/></g>
 <g transform="translate(58,91) rotate(45)"><path d="M-1.8 -8 h3.6 v13 l-1.8 3.5 -1.8 -3.5z M-1.8 -5.8 h3.6" fill="none" stroke="#dcdcdc" stroke-width="1.1"/></g>
 <!-- output gradient -->
 <rect x="88" y="82" width="12" height="256" fill="url(#outg)"/>
 <!-- graph -->
 <rect x="100" y="82" width="256" height="256" fill="#484848"/>
 <rect x="100" y="82" width="256" height="1.2" fill="#3b3b3b"/>
 <path d="M102.5 336.5 L144.0 336.5 L165.0 334.5 L174.0 333.4 L189.0 331.0 L204.0 329.5 L220.0 327.0 L228.0 326.5 L252.0 325.5 L269.0 320.0 L284.0 316.0 L294.0 314.0 L304.0 310.0 L309.0 312.0 L317.0 310.5 L327.0 297.0 L334.0 295.0 L340.0 290.0 L344.0 287.0 L349.0 294.0 L352.0 298.0 L354.5 296.0 L354.5 336.5Z" fill="#8c8c8c"/>
 <g stroke="#3d3d3d" stroke-width="1.4">
  <path d="M165 82 V337 M227.5 82 V337 M290 82 V337"/>
  <path d="M100 147 H356 M100 209.5 H356 M100 272 H356"/>
 </g>
 <path d="M100 336.79999999999995 H356" stroke="#3a3a3a" stroke-width="1.2"/>
 <path d="M102.5 334.5 L352.5 84.5" stroke="#363636" stroke-width="1"/>
 <path d="M101.5 85 V334" stroke="#bdbdbd" stroke-width="1"/>
 <path d="M354.5 85 V337" stroke="#bdbdbd" stroke-width="1"/>
 <path d="M102.5 334.5 L105.3 329.4 L108.1 324.4 L110.9 319.3 L113.7 314.3 L116.5 309.2 L119.4 304.2 L122.2 299.2 L125.0 294.2 L127.8 289.2 L130.6 284.2 L133.4 279.3 L136.2 274.4 L139.0 269.5 L141.8 264.6 L144.6 259.8 L147.4 255.0 L150.3 250.3 L153.1 245.6 L155.9 240.9 L158.7 236.3 L161.5 231.7 L164.3 227.1 L167.1 222.7 L169.9 218.2 L172.7 213.8 L175.5 209.5 L178.3 205.3 L181.2 201.1 L184.0 196.9 L186.8 192.9 L189.6 188.9 L192.4 185.0 L195.2 181.1 L198.0 177.3 L200.8 173.6 L203.6 170.0 L206.4 166.5 L209.2 163.0 L212.1 159.7 L214.9 156.4 L217.7 153.2 L220.5 150.1 L223.3 147.1 L226.1 144.2 L228.9 141.4 L231.7 138.8 L234.5 136.2 L237.3 133.7 L240.1 131.2 L242.9 128.9 L245.8 126.7 L248.6 124.5 L251.4 122.5 L254.2 120.5 L257.0 118.6 L259.8 116.8 L262.6 115.0 L265.4 113.3 L268.2 111.7 L271.0 110.2 L273.8 108.7 L276.7 107.3 L279.5 105.9 L282.3 104.6 L285.1 103.4 L287.9 102.2 L290.7 101.0 L293.5 99.9 L296.3 98.9 L299.1 97.9 L301.9 96.9 L304.7 96.0 L307.6 95.2 L310.4 94.3 L313.2 93.5 L316.0 92.7 L318.8 92.0 L321.6 91.3 L324.4 90.6 L327.2 89.9 L330.0 89.3 L332.8 88.6 L335.6 88.0 L338.5 87.4 L341.3 86.8 L344.1 86.2 L346.9 85.6 L349.7 85.1 L352.5 84.5" fill="none" stroke="#ececec" stroke-width="1.4"/>
 <rect x="100.79999999999995" y="332.79999999999995" width="4" height="4" fill="#535353" stroke="#fff" stroke-width="1.3"/>
 <rect x="351.5" y="82.5" width="4" height="4" fill="#535353" stroke="#fff" stroke-width="1.3"/>
 <rect x="223.5" y="141.8" width="5" height="5" fill="#fff"/>
 <!-- input gradient -->
 <rect x="100" y="339" width="256" height="11" fill="url(#ing)"/>
 <path d="M94.5 361.5 q0 1 1 1 h10 q1 0 1 -1 q0 -1.5 -1 -2.5 l-4 -6.5 q-1 -1.5 -2 0 l-4 6.5 q-1 1 -1 2.5z" fill="#535353" stroke="#1e1e1e" stroke-width="1.1"/>
 <path d="M346.5 361.5 q0 1 1 1 h9 q1 0 1 -1 q0 -1.5 -1 -2.5 l-3.6 -5.5 q-1 -1.5 -2 0 l-3.6 5.5 q-1 1 -1 2.5z" fill="#dedede"/>
 <!-- underlines -->
 <rect x="22" y="338" width="66" height="1" fill="#8a8a8a"/>
 <rect x="100" y="396" width="65" height="1" fill="#8a8a8a"/>
 <!-- hand icon -->
 <g fill="#dedede">
  <path d="M35 384.5 q8.5 -0.5 8.5 6.3 q0 5.7 -6.8 7.4 l1.6 -2 q-2.5 0 -3.5 -1.2 h-2.5 q-0.8 0 -0.8 -0.9 h2.7 l-0.4 -1.2 h-3.6 q-0.7 -0.6 0 -1.2 h3.4 l0 -1.3 h-2.4 q-0.6 -0.6 0 -1.2 h2.6 l0.8 -1.2 h-1.5 q-0.4 -0.7 0.3 -1.2z"/>
  <path d="M25 390 l2.6 -3.2 2.6 3.2z M25 395.20000000000005 l2.6 3.2 2.6 -3.2z"/>
 </g>
 <!-- eyedroppers -->
 <g transform="translate(185.5,389) rotate(45)">
  <rect x="-2.2" y="-10.5" width="4.4" height="6.2" rx="2.2" fill="#e6e6e6"/>
  <rect x="-3.9" y="-5" width="7.8" height="2.7" rx="0.5" fill="#e6e6e6"/>
  <rect x="-2.2" y="-2.8" width="4.4" height="2" fill="#e6e6e6"/>
  <path d="M-1.8 -1 v8 a1.8 1.8 0 0 0 3.6 0 v-8z" fill="#111" stroke="#e6e6e6" stroke-width="1.1"/>
  <rect x="-1.3" y="-1" width="2.6" height="3.5" fill="#535353"/>
 </g>
 <g transform="translate(212,389) rotate(45)">
  <rect x="-2.2" y="-10.5" width="4.4" height="6.2" rx="2.2" fill="#8e8e8e"/>
  <rect x="-3.9" y="-5" width="7.8" height="2.7" rx="0.5" fill="#8e8e8e"/>
  <rect x="-2.2" y="-2.8" width="4.4" height="2" fill="#8e8e8e"/>
  <path d="M-1.8 -1 v8 a1.8 1.8 0 0 0 3.6 0 v-8z" fill="#777" stroke="#8e8e8e" stroke-width="1.1"/>
  <rect x="-1.3" y="-1" width="2.6" height="3.5" fill="#535353"/>
 </g>
 <g transform="translate(238,389) rotate(45)">
  <rect x="-2.2" y="-10.5" width="4.4" height="6.2" rx="2.2" fill="#e6e6e6"/>
  <rect x="-3.9" y="-5" width="7.8" height="2.7" rx="0.5" fill="#e6e6e6"/>
  <rect x="-2.2" y="-2.8" width="4.4" height="2" fill="#e6e6e6"/>
  <path d="M-1.8 -1 v8 a1.8 1.8 0 0 0 3.6 0 v-8z" fill="#e6e6e6" stroke="#e6e6e6" stroke-width="1.1"/>
  <rect x="-1.3" y="-1" width="2.6" height="3.5" fill="#535353"/>
 </g>
 <rect x="259.5" y="381.5" width="12" height="12" rx="2" fill="#4d4d4d" stroke="#5c5c5c" stroke-width="1"/>
 <!-- radios -->
 <circle cx="415.29999999999995" cy="42.69999999999999" r="6.3" fill="#d8d8d8"/>
 <circle cx="415.29999999999995" cy="42.69999999999999" r="2.5" fill="#2a2a2a"/>
 <circle cx="415.29999999999995" cy="77" r="5.8" fill="none" stroke="#6c6c6c" stroke-width="1.2"/>
 <!-- grid btns -->
 <rect x="409" y="141" width="24" height="24" rx="2" fill="#3b3b3b"/>
 <g fill="none" stroke="#e0e0e0" stroke-width="1.2"><rect x="414.5" y="146.5" width="12.5" height="12.5"/><path d="M420.75 146.5 v12.5 M414.5 152.75 h12.5"/></g>
 <rect x="440" y="146" width="13" height="13" fill="#d0d0d0"/>
 <g fill="#535353">
<rect x="441" y="147" width="2" height="2" fill="#6a6a6a"/><rect x="441" y="150" width="2" height="2" fill="#6a6a6a"/><rect x="441" y="153" width="2" height="2" fill="#6a6a6a"/><rect x="441" y="156" width="2" height="2" fill="#6a6a6a"/><rect x="444" y="147" width="2" height="2" fill="#6a6a6a"/><rect x="444" y="150" width="2" height="2" fill="#6a6a6a"/><rect x="444" y="153" width="2" height="2" fill="#6a6a6a"/><rect x="444" y="156" width="2" height="2" fill="#6a6a6a"/><rect x="447" y="147" width="2" height="2" fill="#6a6a6a"/><rect x="447" y="150" width="2" height="2" fill="#6a6a6a"/><rect x="447" y="153" width="2" height="2" fill="#6a6a6a"/><rect x="447" y="156" width="2" height="2" fill="#6a6a6a"/><rect x="450" y="147" width="2" height="2" fill="#6a6a6a"/><rect x="450" y="150" width="2" height="2" fill="#6a6a6a"/><rect x="450" y="153" width="2" height="2" fill="#6a6a6a"/><rect x="450" y="156" width="2" height="2" fill="#6a6a6a"/> </g>
 <!-- checkboxes -->
 <rect x="408.5" y="215.5" width="12.5" height="12.5" rx="2" fill="#666"/>
 <path d="M411.3 221.8 l2.5 2.6 4.4 -5.2" fill="none" stroke="#8a8a8a" stroke-width="1.7"/>
 <rect x="408.5" y="242.5" width="12.5" height="12.5" rx="2" fill="#d6d6d6"/><path d="M411.3 248.8 l2.5 2.6 4.4 -5.2" fill="none" stroke="#2b2b2b" stroke-width="1.7"/>
 <rect x="408.5" y="269.5" width="12.5" height="12.5" rx="2" fill="#d6d6d6"/><path d="M411.3 275.8 l2.5 2.6 4.4 -5.2" fill="none" stroke="#2b2b2b" stroke-width="1.7"/>
 <rect x="408.5" y="296.5" width="12.5" height="12.5" rx="2" fill="#d6d6d6"/><path d="M411.3 302.8 l2.5 2.6 4.4 -5.2" fill="none" stroke="#2b2b2b" stroke-width="1.7"/>
 <rect x="558.5" y="217.0" width="12.5" height="12.5" rx="2" fill="#d6d6d6"/><path d="M561.3 223.3 l2.5 2.6 4.4 -5.2" fill="none" stroke="#2b2b2b" stroke-width="1.7"/>
</svg>
</body></html>
